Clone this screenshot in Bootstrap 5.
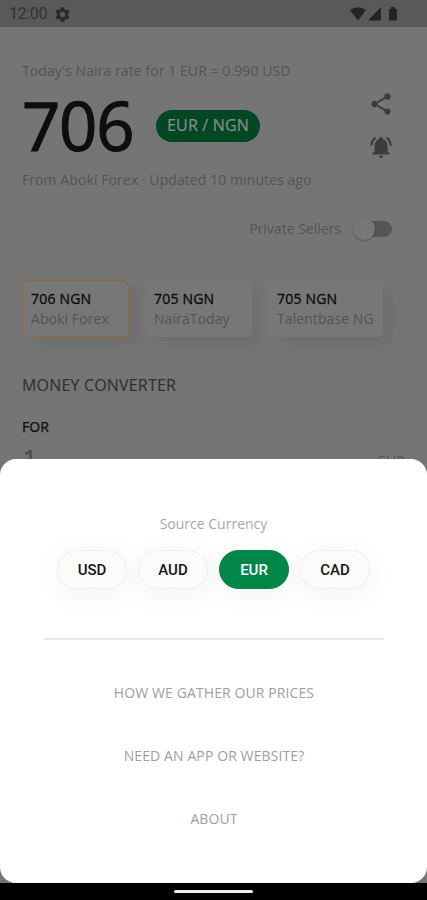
<!DOCTYPE html>
<html lang="en">
<head>
<meta charset="utf-8">
<meta name="viewport" content="width=device-width, initial-scale=1">
<title>Naira rates</title>
<link href="https://cdn.jsdelivr.net/npm/bootstrap@5.3.0/dist/css/bootstrap.min.css" rel="stylesheet">
<style>
body{font-family:"Open Sans","Noto Sans",sans-serif;background:#757575;color:#555;font-size:14px;line-height:20px}
.phone{width:427px;height:900px}
.statusbar{height:27px;background:#595959;color:#333;font-family:Roboto,sans-serif;font-size:16px;padding:1px 28px 0 9px}
.t-clock{letter-spacing:-.35px}
.dimmed{height:432px;padding:34px 22px 0}
.muted{color:#545454}
.t-today,.t-from{letter-spacing:.08px}
.figure-rate{font-size:67px;line-height:72px;color:#0e0e0e;width:112px;letter-spacing:-1.2px;margin-top:-4px;-webkit-text-stroke:1.2px #0e0e0e}
.rate-row{height:72px;margin-top:10px}
.pair{background:#004723;color:#8c8c8c;font-size:16px;line-height:31px;width:104px;height:32px;margin-left:22px;margin-top:-2px;letter-spacing:.2px;-webkit-text-stroke:.2px #8c8c8c}
.pair,.coin{flex:none}
.t-from{margin-top:7px}
.hero{height:109px}
.actions{width:24px;margin-right:12px}
.share{margin-top:10px}
.bell{margin-top:17px}
.private{margin-top:30px;height:18px;gap:20px}
.track{width:31px;height:16px;background:#555;border-radius:8px;margin-right:13px}
.knob{left:-8px;top:-3px;width:22px;height:22px;border-radius:50%;background:#777;box-shadow:0 1px 2px rgba(0,0,0,.28)}
.sources{gap:16px;margin-top:42px}
.source{width:107px;height:57px;padding:8px 0 0 8px;border-radius:6px;background:#777;border:1px solid #777;box-shadow:10px 8px 10px rgba(0,0,0,.05);letter-spacing:.08px}
.source.wide{width:115px}
.source.chosen{border-color:#8e6a38}
.source strong{font-weight:400;color:#0b0b0b;display:block;letter-spacing:.2px;-webkit-text-stroke:.3px #0b0b0b}
.t-money{font-size:16px;color:#303030;margin-top:38px;letter-spacing:.18px;-webkit-text-stroke:.1px #303030}
.t-for{color:#0b0b0b;margin-top:22px;letter-spacing:.1px;-webkit-text-stroke:.25px #0b0b0b}
.amount{margin-top:9px;height:40px}
.one{font-size:24px;line-height:28px;color:#4c4c4c;margin-left:1px;margin-top:-2px;-webkit-text-stroke:.6px #4c4c4c}
.unit{color:#555;line-height:30px}
.sheet-wrap{background:#757575}
.sheet{height:424px;border-radius:16px;background:#fff;padding:55px 43px 0 44px}
.t-source{color:#a8a8a8;margin-left:-1px}
.coins{gap:11px;margin-top:16px;margin-left:-1px}
.coin{width:70px;height:39px;background:#fbfbfb;border:1px solid #efefef;font-family:Roboto,sans-serif;font-size:15px;font-weight:500;color:#151515;box-shadow:0 5px 28px rgba(0,0,0,.06);padding:1px 0 0}
.coin.chosen{background:#008748;border-color:#008748;color:#fff}
.rule{height:2px;background:#e6e6e6;margin-top:49px}
.links{gap:43px;margin-top:43px}
.links a{color:#a0a0a0;text-decoration:none;line-height:20px;letter-spacing:.1px}
.navpill{width:79px;height:3px;background:#eee}
</style>
</head>
<body>
<div class="phone d-flex flex-column overflow-hidden">
  <header class="statusbar d-flex align-items-center flex-shrink-0">
    <span class="t-clock">12:00</span>
    <svg class="ms-2" width="15" height="15" viewBox="2 2 20 20" fill="#2a2a2a"><path d="M19.14 12.94c.04-.3.06-.61.06-.94s-.02-.64-.07-.94l2.03-1.58c.18-.14.23-.41.12-.61l-1.92-3.32c-.12-.22-.37-.29-.59-.22l-2.39.96c-.5-.38-1.03-.7-1.62-.94l-.36-2.54c-.04-.24-.24-.41-.48-.41h-3.84c-.24 0-.43.17-.47.41l-.36 2.54c-.59.24-1.13.57-1.62.94l-2.39-.96c-.22-.08-.47 0-.59.22L2.74 8.87c-.12.21-.08.47.12.61l2.03 1.58c-.05.3-.09.63-.09.94s.02.64.07.94l-2.03 1.58c-.18.14-.23.41-.12.61l1.92 3.32c.12.22.37.29.59.22l2.39-.96c.5.38 1.03.7 1.62.94l.36 2.54c.05.24.24.41.48.41h3.84c.24 0 .44-.17.47-.41l.36-2.54c.59-.24 1.13-.56 1.62-.94l2.39.96c.22.08.47 0 .59-.22l1.92-3.32c.12-.22.07-.47-.12-.61l-2.01-1.58zM12 15.6A3.6 3.6 0 1 1 12 8.4a3.6 3.6 0 0 1 0 7.2z"/></svg>
    <svg class="ms-auto" width="49" height="14" viewBox="0 0 49 14" fill="#242424"><path d="M0 3Q8 -2.500 16 3L8 13.500zM18 13.500L31 0V13.500zM39 2h2V0h4v2h2v11.500h-8z"/></svg>
  </header>
  <main class="dimmed overflow-hidden flex-shrink-0">
    <div class="muted t-today text-nowrap">Today's Naira rate for 1 EUR = 0.990 USD</div>
    <div class="d-flex justify-content-between hero">
      <div>
        <div class="d-flex align-items-center rate-row">
          <div class="figure-rate">706</div>
          <span class="pair rounded-pill text-center text-nowrap">EUR / NGN</span>
        </div>
        <div class="muted t-from text-nowrap">From Aboki Forex · Updated 10 minutes ago</div>
      </div>
      <div class="actions d-flex flex-column align-items-center">
        <svg class="share" width="26" height="26" viewBox="0 0 24 24" fill="#3c3c3c"><path d="M18 16.080c-.76 0-1.440.3-1.960.77L8.910 12.700c.05-.23.090-.46.090-.7s-.04-.47-.09-.7l7.050-4.110c.54.5 1.250.81 2.040.81 1.660 0 3-1.340 3-3s-1.340-3-3-3-3 1.340-3 3c0 .24.040.47.090.7L8.040 9.810C7.500 9.310 6.790 9 6 9c-1.660 0-3 1.340-3 3s1.340 3 3 3c.79 0 1.500-.31 2.040-.81l7.120 4.160c-.05.21-.08.43-.08.65 0 1.610 1.310 2.920 2.920 2.920s2.920-1.310 2.920-2.920-1.310-2.920-2.920-2.920z"/></svg>
        <svg class="bell" width="26" height="26" viewBox="0 0 24 24" fill="#3c3c3c"><path d="M7.580 4.080L6.150 2.650C3.750 4.480 2.170 7.300 2.030 10.500h2c.15-2.650 1.510-4.970 3.550-6.420zM19.970 10.500h2c-.15-3.200-1.730-6.020-4.120-7.850l-1.420 1.430c2.020 1.450 3.390 3.770 3.540 6.420zM18 11c0-3.070-1.640-5.640-4.500-6.320V4a1.500 1.500 0 0 0-3 0v.68C7.630 5.360 6 7.920 6 11v5l-2 2v1h16v-1l-2-2zM12 22c1.100 0 2-.9 2-2h-4c0 1.100.9 2 2 2z"/></svg>
      </div>
    </div>
    <div class="d-flex align-items-center justify-content-end private">
      <span class="muted">Private Sellers</span>
      <div class="track position-relative"><div class="knob position-absolute"></div></div>
    </div>
    <div class="d-flex sources">
      <div class="source chosen"><strong>706 NGN</strong><span class="muted">Aboki Forex</span></div>
      <div class="source"><strong>705 NGN</strong><span class="muted">NairaToday</span></div>
      <div class="source wide text-nowrap"><strong>705 NGN</strong><span class="muted">Talentbase NG</span></div>
    </div>
    <div class="t-money">MONEY CONVERTER</div>
    <div class="t-for">FOR</div>
    <div class="d-flex justify-content-between amount"><span class="one">1</span><span class="unit">EUR</span></div>
  </main>
  <div class="sheet-wrap flex-shrink-0">
    <section class="sheet text-center">
      <div class="t-source">Source Currency</div>
      <div class="d-flex justify-content-center coins">
        <button class="btn coin rounded-pill">USD</button>
        <button class="btn coin rounded-pill">AUD</button>
        <button class="btn coin rounded-pill chosen">EUR</button>
        <button class="btn coin rounded-pill">CAD</button>
      </div>
      <div class="rule"></div>
      <nav class="links d-flex flex-column align-items-center">
        <a href="#">HOW WE GATHER OUR PRICES</a>
        <a href="#">NEED AN APP OR WEBSITE?</a>
        <a href="#">ABOUT</a>
      </nav>
    </section>
  </div>
  <footer class="bg-black flex-grow-1 d-flex align-items-center justify-content-center"><div class="navpill rounded-pill"></div></footer>
</div>
<script src="https://cdn.jsdelivr.net/npm/bootstrap@5.3.0/dist/js/bootstrap.bundle.min.js"></script>
</body>
</html>
